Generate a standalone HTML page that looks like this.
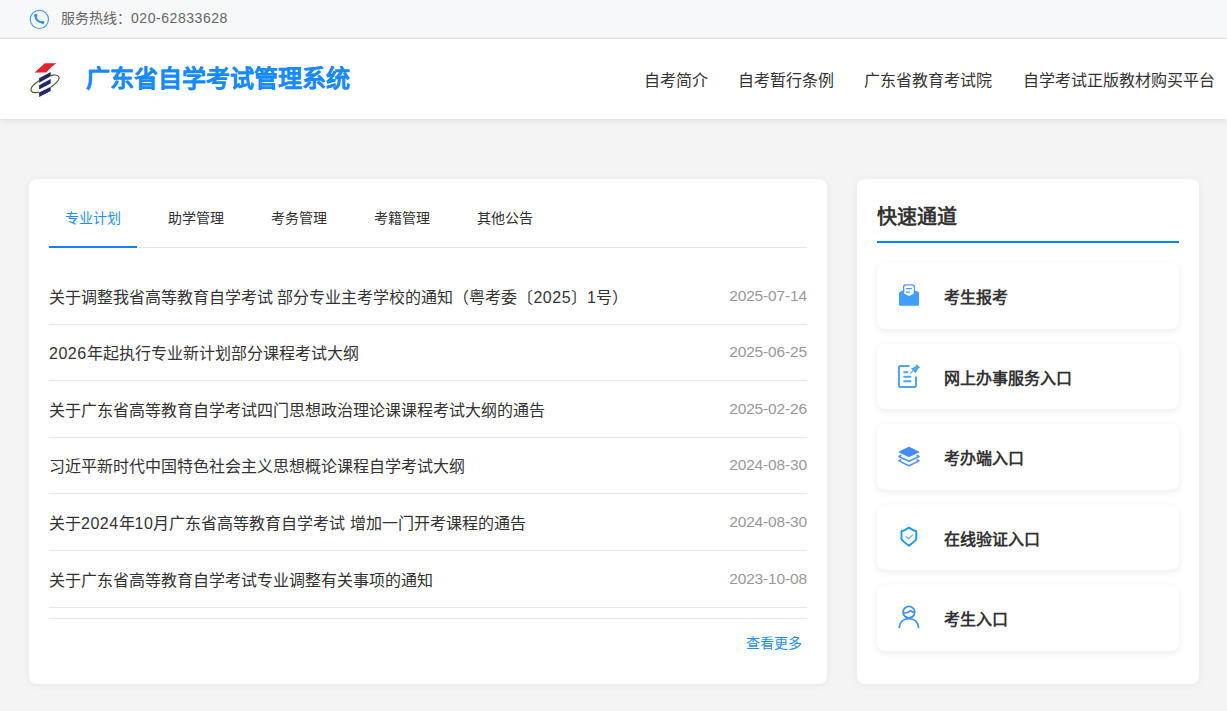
<!DOCTYPE html>
<html lang="zh-CN">
<head>
<meta charset="utf-8">
<title>广东省自学考试管理系统</title>
<style>
*{margin:0;padding:0;box-sizing:border-box;}
html,body{width:1227px;height:711px;overflow:hidden;}
body{position:relative;background:#f4f4f4;font-family:"Liberation Sans",sans-serif;color:#333;}
.abs{position:absolute;}
.topbar{position:absolute;left:0;top:0;width:1227px;height:39px;background:#f7f8fa;border-bottom:1px solid #e2e3e5;}
.topbar .txt{position:absolute;left:61px;top:9px;font-size:14px;line-height:18px;color:#666;white-space:nowrap;}
.header{position:absolute;left:0;top:39px;width:1227px;height:80px;background:#fff;box-shadow:0 2px 7px rgba(0,0,0,0.09);}
.title{position:absolute;left:86px;top:25px;font-size:24px;line-height:30px;font-weight:bold;-webkit-text-stroke:0.15px #168aff;color:#168aff;white-space:nowrap;}
.nav{position:absolute;top:31px;font-size:16px;line-height:22px;color:#333;white-space:nowrap;}
.card{position:absolute;background:#fff;border-radius:8px;box-shadow:0 1px 8px rgba(0,0,0,0.06);}
.tab{position:absolute;top:29px;font-size:14px;line-height:20px;color:#303133;white-space:nowrap;}
.tab.on{color:#1890ff;}
.tabline{position:absolute;left:20px;top:68px;width:758px;height:1px;background:#e4e7ed;}
.tabbar{position:absolute;left:20px;top:67px;width:88px;height:2px;background:#0a84ff;}
.row{position:absolute;left:20px;width:758px;height:57px;border-bottom:1px solid #e8e8e8;}
.row .t{position:absolute;left:0;top:19px;font-size:16px;line-height:22px;color:#333;white-space:nowrap;}
.row .d{position:absolute;right:0;letter-spacing:-0.15px;top:17px;font-size:15.5px;line-height:22px;color:#999;white-space:nowrap;}
.n{letter-spacing:0.5px;}
.more{position:absolute;right:25px;top:454px;font-size:14px;line-height:20px;color:#1890ff;}
.qt{position:absolute;left:20px;top:24px;font-size:20px;line-height:28px;font-weight:bold;color:#333;}
.qline{position:absolute;left:20px;top:62px;width:302px;height:2px;background:#0a84ff;}
.item{position:absolute;left:20px;width:302px;height:65.5px;background:#fff;border-radius:8px;box-shadow:0 2px 7px rgba(0,0,0,0.075);}
.item .ic{position:absolute;left:20px;top:20px;width:24px;height:24px;}
.item .lb{position:absolute;left:67px;top:24px;font-size:16px;line-height:22px;font-weight:bold;color:#333;white-space:nowrap;}
</style>
</head>
<body>
<div class="topbar">
  <svg class="abs" style="left:29px;top:9px" width="21" height="21" viewBox="0 0 21 21">
    <circle cx="10.35" cy="10.4" r="9.1" fill="none" stroke="#3a97fb" stroke-width="1.1"/>
    <path d="M6.6 6.7 C6.4 10.6 9.6 13.6 13.8 13.4" fill="none" stroke="#2f8ff7" stroke-width="2.1" stroke-linecap="round"/>
    <circle cx="6.7" cy="6.6" r="1.75" fill="#2f8ff7"/><circle cx="13.7" cy="13.3" r="1.6" fill="#2f8ff7"/>
  </svg>
  <div class="txt">服务热线：<span style="letter-spacing:0.55px">020-62833628</span></div>
</div>
<div class="header">
  <svg class="abs" style="left:28px;top:21px" width="34" height="40" viewBox="28 60 34 40">
    <defs><mask id="m"><rect x="28" y="60" width="34" height="40" fill="#fff"/><rect x="39.1" y="60" width="11.6" height="40" fill="#000"/></mask></defs>
    <path d="M44.8 63.2 L56.4 63.2 Q50.8 66.6 46.2 72.4 L34.7 72.4 Z" fill="#e3232a"/>
    <g mask="url(#m)"><ellipse cx="45" cy="83.8" rx="15.5" ry="5.8" transform="rotate(-27.5 45 83.8)" fill="none" stroke="#355a20" stroke-width="1.1"/></g>
    <path d="M39.1 78.2 L50.7 72.1 L50.7 76.3 L39.1 82.7 Z" fill="#25256f"/>
    <path d="M39.1 85.2 L50.7 79.1 L50.7 83.5 L39.1 89.6 Z" fill="#25256f"/>
    <path d="M39.1 92.6 L50.7 86.7 L50.7 91.1 L39.1 97.0 Z" fill="#25256f"/>
  </svg>
  <div class="title">广东省自学考试管理系统</div>
  <div class="nav" style="left:644px">自考简介</div>
  <div class="nav" style="left:738px">自考暂行条例</div>
  <div class="nav" style="left:864px">广东省教育考试院</div>
  <div class="nav" style="left:1022.5px">自学考试正版教材购买平台</div>
</div>

<div class="card" style="left:29px;top:179px;width:798px;height:505px">
  <div class="tab on" style="left:36px">专业计划</div>
  <div class="tab" style="left:139px">助学管理</div>
  <div class="tab" style="left:242px">考务管理</div>
  <div class="tab" style="left:345px">考籍管理</div>
  <div class="tab" style="left:448px">其他公告</div>
  <div class="tabline"></div>
  <div class="tabbar"></div>
  <div class="row" style="top:89px"><div class="t">关于调整我省高等教育自学考试 部分专业主考学校的通知（粤考委〔<span class="n">2025</span>〕<span class="n">1</span>号）</div><div class="d">2025-07-14</div></div>
  <div class="row" style="top:145px"><div class="t"><span class="n">2026</span>年起执行专业新计划部分课程考试大纲</div><div class="d">2025-06-25</div></div>
  <div class="row" style="top:202px"><div class="t">关于广东省高等教育自学考试四门思想政治理论课课程考试大纲的通告</div><div class="d">2025-02-26</div></div>
  <div class="row" style="top:258px"><div class="t">习近平新时代中国特色社会主义思想概论课程自学考试大纲</div><div class="d">2024-08-30</div></div>
  <div class="row" style="top:315px"><div class="t">关于<span class="n">2024</span>年<span class="n">10</span>月广东省高等教育自学考试 增加一门开考课程的通告</div><div class="d">2024-08-30</div></div>
  <div class="row" style="top:372px"><div class="t">关于广东省高等教育自学考试专业调整有关事项的通知</div><div class="d">2023-10-08</div></div>
  <div class="abs" style="left:20px;top:439px;width:758px;height:1px;background:#e8e8e8"></div>
  <div class="more">查看更多</div>
</div>

<div class="card" style="left:857px;top:179px;width:342px;height:505px">
  <div class="qt">快速通道</div>
  <div class="qline"></div>
  <div class="item" style="top:84px"><svg class="ic" viewBox="0 0 24 24"><path fill="#409eff" d="M2 10.3 Q2 9.1 3.1 8.7 L6.2 7.6 L17.8 7.6 L20.9 8.7 Q22 9.1 22 10.3 L22 21.6 Q22 22.8 20.8 22.8 L3.2 22.8 Q2 22.8 2 21.6 Z"/><path fill="#409eff" d="M6 11 L6 3.7 Q6 1.2 8.5 1.2 L15.4 1.2 Q17.9 1.2 17.9 3.7 L17.9 11 Z"/><path fill="#fff" d="M7.3 10.7 L7.3 4.1 Q7.3 2.6 8.8 2.6 L15.2 2.6 Q16.7 2.6 16.7 4.1 L16.7 10.7 L12.05 13.1 Z"/><path stroke="#409eff" stroke-width="1.3" stroke-linecap="round" d="M9.3 5.6 L14.5 5.6 M9.3 9.05 L12.5 9.05"/></svg><div class="lb">考生报考</div></div>
  <div class="item" style="top:164.5px"><svg class="ic" viewBox="0 0 24 24"><path fill="none" stroke="#4ea6e9" stroke-width="2" stroke-linecap="round" stroke-linejoin="round" d="M11.8 2.1 L3.4 2.1 Q1.9 2.1 1.9 3.6 L1.9 21.6 Q1.9 23.1 3.4 23.1 L17.5 23.1 Q19 23.1 19 21.6 L19 13.3 M7.2 8.2 L10.3 8.2 M7.2 12.75 L13.45 12.75 M7.2 17.15 L13.45 17.15"/><path fill="#4ea6e9" d="M19.8 0.25 L23.1 3.55 L21.2 4.75 L18.5 9.25 L14.0 4.85 L18.5 2.25 Z"/><path stroke="#4ea6e9" stroke-width="1.1" stroke-linecap="round" d="M16 6.85 L13.6 9.05"/></svg><div class="lb">网上办事服务入口</div></div>
  <div class="item" style="top:245px"><svg class="ic" viewBox="0 0 24 24"><path fill="#3f8cf8" stroke="#3f8cf8" stroke-width="0.8" stroke-linejoin="round" d="M1.9 8.1 L11.9 3.1 L22.1 8.1 L11.9 12.7 Z"/><path fill="none" stroke="#4f95f8" stroke-width="1.6" stroke-linecap="round" stroke-linejoin="round" d="M3.8 11.5 L1.9 12.5 L11.9 17.3 L22.1 12.5 L20.1 11.5 M3.8 15.8 L1.9 16.9 L11.9 21.8 L22.1 16.9 L20.1 15.8"/></svg><div class="lb">考办端入口</div></div>
  <div class="item" style="top:325.5px"><svg class="ic" viewBox="0 0 24 24"><path fill="none" stroke="#1c9bf0" stroke-width="1.9" stroke-linejoin="round" d="M11.9 2.6 C9.5 4.6 7 5.8 4.5 6.2 L4.5 13.8 C4.5 15 9.5 19.2 11.9 20.6 C14.3 19.2 19.3 15 19.3 13.8 L19.3 6.2 C16.8 5.8 14.3 4.6 11.9 2.6 Z"/><path fill="none" stroke="#6cc3f2" stroke-width="1.6" stroke-linecap="round" stroke-linejoin="round" d="M9.2 11.8 L11.5 13.8 L15.6 10"/></svg><div class="lb">在线验证入口</div></div>
  <div class="item" style="top:406px"><svg class="ic" viewBox="0 0 24 24"><circle cx="11.9" cy="7.15" r="5.8" fill="none" stroke="#3d90fb" stroke-width="1.8"/><path fill="none" stroke="#3d90fb" stroke-width="1.6" stroke-linecap="round" stroke-linejoin="round" d="M6.4 7.9 Q10.5 8.6 13.5 5.6 Q15.2 7.3 17.4 7.3"/><path fill="none" stroke="#3d90fb" stroke-width="1.8" stroke-linecap="round" d="M2.3 22.3 C2.8 17 6.6 13.6 11.9 13.6 C17.2 13.6 21 17 21.6 22.3"/></svg><div class="lb">考生入口</div></div>
</div>
</body>
</html>
